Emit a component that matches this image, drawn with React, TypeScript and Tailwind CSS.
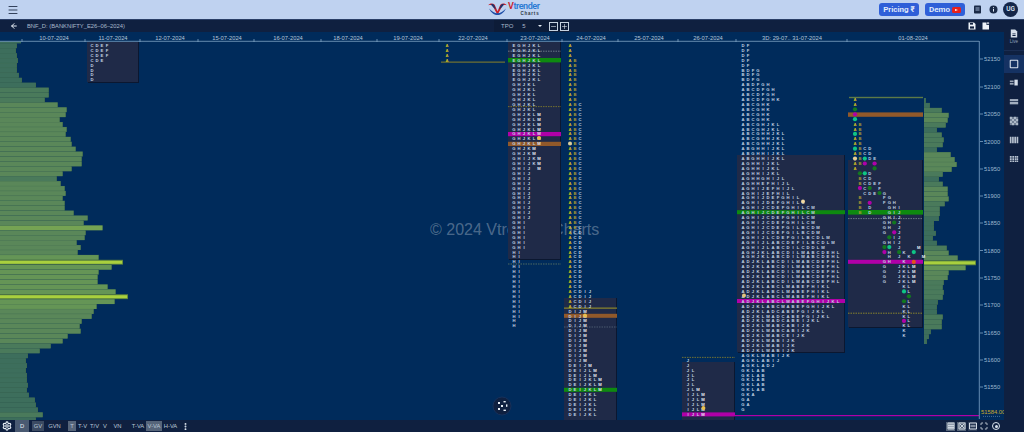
import { ArrowLeft, Maximize, Menu, Minus, Plus, Settings, MoreVertical } from 'lucide-react';

type RowSpec = [number, number, string];

type Session = {
  x: number;
  pitch?: number;
  colors?: Record<string, string>;
  rows: RowSpec[];
};

const LETTER = '#c2d3e3';
const YELLOW = '#d2bf22';
const OLIVE = '#a89a34';
const WHITE = '#eaf1f7';

const rowY = (i: number) => 45.4 + 4.92 * i;

const leftBars = [
  17, 16, 17, 18, 17, 17, 19, 22, 36, 49, 49, 45, 58, 67, 66, 60, 63, 67, 66, 71, 72, 76, 83, 82, 82, 72, 63, 57, 61, 65,
  66, 63, 65, 65, 74, 88, 84, 103, 86, 85, 77, 81, 78, 99, 123, 112, 99, 98, 98, 108, 116, 128, 115, 97, 94, 92, 82, 80,
  81, 68, 63, 51, 40, 28, 26, 27, 26, 27, 27, 28, 27, 29, 35, 36, 38, 43, 36,
];

const rightBars = [
  2, 6, 18, 25, 24, 22, 13, 18, 20, 19, 13, 27, 31, 33, 28, 19, 15, 19, 24, 24, 25, 21, 16, 16, 15, 10, 10, 12, 9, 13, 23,
  25, 34, 52, 42, 25, 24, 20, 19, 20, 19, 14, 13, 13, 19, 18, 18, 7, 5, 3,
];

const dates: [number, string][] = [
  [54, '10-07-2024'],
  [113, '11-07-2024'],
  [170, '12-07-2024'],
  [227, '15-07-2024'],
  [288, '16-07-2024'],
  [348, '18-07-2024'],
  [408, '19-07-2024'],
  [473, '22-07-2024'],
  [535, '23-07-2024'],
  [591, '24-07-2024'],
  [649, '25-07-2024'],
  [708, '26-07-2024'],
  [792, '3D: 29-07.. 31-07-2024'],
  [913, '01-08-2024'],
];

const ticks = [22, 85, 140, 198, 254, 321, 377, 439, 507, 562, 618, 678, 736, 847];

const prices: [number, string][] = [
  [59, '52150'],
  [87, '52100'],
  [114, '52050'],
  [141.5, '52000'],
  [169, '51950'],
  [196, '51900'],
  [223, '51850'],
  [250.5, '51800'],
  [278, '51750'],
  [305, '51700'],
  [333, '51650'],
  [360, '51600'],
  [387, '51550'],
];

// market profile letters, one block per session
const sessions: Session[] = [
  { x: 92, rows: [[0, 2, 'CDEF'], [3, 3, 'CDE'], [4, 7, 'D']] },
  { x: 447, colors: { A: YELLOW }, rows: [[0, 3, 'A']] },
  {
    x: 514,
    colors: { M: WHITE },
    rows: [
      [0, 7, 'EGHJKL'],
      [8, 13, 'GHJKL'],
      [14, 20, 'GHJKLM'],
      [21, 22, 'GHJKM'],
      [23, 24, 'GHIJKM'],
      [25, 25, 'GHIJ M'],
      [26, 35, 'GHIJ'],
      [36, 41, 'GHI'],
      [42, 55, 'HI'],
      [56, 57, 'H'],
    ],
  },
  {
    x: 570,
    colors: { A: YELLOW, B: OLIVE, M: WHITE },
    rows: [
      [0, 2, 'A'],
      [3, 11, 'AB'],
      [12, 37, 'ABC'],
      [38, 49, 'ACD'],
      [50, 53, 'ACDIJ'],
      [54, 64, 'DIJM'],
      [65, 65, 'DEIJM'],
      [66, 67, 'DEIJLM'],
      [68, 70, 'DEIJKLM'],
      [71, 75, 'DEIJKL'],
    ],
  },
  {
    x: 688,
    colors: { M: WHITE },
    rows: [
      [64, 65, 'J'],
      [66, 69, 'JL'],
      [70, 70, 'JLM'],
      [71, 75, 'IJLM'],
    ],
  },
  {
    x: 743,
    rows: [
      [0, 4, 'DF'],
      [5, 7, 'BDFG'],
      [8, 8, 'ABDFGH'],
      [9, 10, 'ABCDFGH'],
      [11, 11, 'ABCDFGHK'],
      [12, 15, 'ABCGHK'],
      [16, 17, 'ABCGHJKL'],
      [18, 20, 'ABCGHHJKL'],
      [21, 23, 'ABGHHIJKL'],
      [24, 26, 'AGHHIJKL'],
      [27, 27, 'AGHHGHIJL'],
      [28, 28, 'AGHHEFHIJL'],
      [29, 29, 'AGHIJEFHIJL'],
      [30, 30, 'AGHIJEFHIL'],
      [31, 31, 'AGHIJDEFGHIL'],
      [32, 32, 'AGHIJDEFGHILC'],
      [33, 36, 'AGHIJCDEFGHILCM'],
      [37, 38, 'AGHIJCDEFGILBCDM'],
      [39, 39, 'AGHIJLCDEFGILBCDLM'],
      [40, 40, 'AGHIJLABCDEFILBCDLM'],
      [41, 41, 'AGHIJLABCDILCDDLM'],
      [42, 43, 'AGHJKLABCDILMABCDEHL'],
      [44, 48, 'ADJKLABCDILMABCDEFHL'],
      [49, 51, 'ADJKLABCLMABEFHIKL'],
      [52, 52, 'ADJKLABCLMABEFGHIJKL'],
      [53, 53, 'ADJKLABCMABEFGHIJKL'],
      [54, 54, 'ADJKLADCABEFGIJKL'],
      [55, 55, 'ADJKLMADCABEFGIJKL'],
      [56, 56, 'ADJKLMADCABEIJKL'],
      [57, 58, 'ADJKLMABCABIJK'],
      [59, 59, 'ADJKLMABCEIJK'],
      [60, 62, 'ADJKLMABIJK'],
      [63, 63, 'AGKLMABIJK'],
      [64, 64, 'AGKLABIJ'],
      [65, 65, 'AGKLADJ'],
      [66, 70, 'GKLAB'],
      [71, 71, 'GKA'],
      [72, 73, 'GA'],
      [74, 74, 'G'],
    ],
  },
  {
    x: 855,
    pitch: 4.9,
    colors: { A: YELLOW, B: OLIVE, M: WHITE },
    rows: [
      [11, 12, 'A'],
      [16, 17, 'AB'],
      [18, 18, ' B'],
      [19, 19, 'AB'],
      [20, 20, 'AB'],
      [21, 21, ' BCD'],
      [22, 22, 'ABCD'],
      [23, 23, ' B DE'],
      [24, 24, 'AB  D'],
      [25, 25, 'A'],
      [26, 26, '   D'],
      [27, 27, ' BCD'],
      [28, 28, ' BCDEF'],
      [29, 29, '  C  F'],
      [30, 30, '  CDE G'],
      [31, 31, ' B    FG'],
      [32, 32, ' B    FGH'],
      [33, 33, ' B D   GHI'],
      [34, 34, ' B D   GIJ'],
      [35, 35, '      GHIJ'],
      [36, 37, '      GH J'],
      [38, 38, '      G  J'],
      [39, 39, '        IJ'],
      [40, 40, '      GHIJ'],
      [41, 41, '         J   M'],
      [42, 42, '       H  K'],
      [43, 43, '       H J K  M'],
      [44, 44, '      GH  K'],
      [45, 48, '      G  JKLM'],
      [49, 49, '          KL'],
      [50, 50, '           L'],
      [52, 52, '           L'],
      [53, 55, '          KL'],
      [56, 56, '           L'],
      [57, 57, '          KL'],
      [58, 59, '          K'],
    ],
  },
];

const GREEN = '#12791f';
const TEAL = '#0fc585';
const PINK = '#b000a8';

// [slot, row, colour] opportunity markers on the last session
const dots: [number, number, string][] = [
  [0, 13, GREEN],
  [0, 14, PINK],
  [0, 15, TEAL],
  [0, 18, TEAL],
  [0, 21, TEAL],
  [0, 23, '#e6cf94'],
  [2, 23, TEAL],
  [2, 24, PINK],
  [4, 24, PINK],
  [4, 25, GREEN],
  [1, 26, GREEN],
  [2, 26, TEAL],
  [1, 29, PINK],
  [3, 29, GREEN],
  [5, 30, GREEN],
  [3, 32, PINK],
  [8, 36, GREEN],
  [8, 38, PINK],
  [7, 39, GREEN],
  [6, 41, GREEN],
  [7, 41, TEAL],
  [6, 42, PINK],
  [9, 42, GREEN],
  [12, 42, TEAL],
  [12, 44, '#e2531a'],
  [10, 50, TEAL],
  [11, 51, GREEN],
  [10, 52, GREEN],
  [10, 56, PINK],
];

function barColor(width: number, max: number) {
  const r = width / max;
  if (r < 0.3) return '#3d6e5c';
  if (r < 0.45) return '#4a7a5b';
  if (r < 0.75) return '#5a8759';
  return '#659556';
}

function Profile({
  x,
  top,
  bars,
  peaks,
  max,
  mid = [],
}: {
  x: number;
  top: number;
  bars: number[];
  peaks: number[];
  max: number;
  mid?: number[];
}) {
  return (
    <g>
      {bars.map((w, i) => {
        const peak = peaks.includes(i);
        const fill = peak ? '#a9d03e' : mid.includes(i) ? '#75a353' : barColor(w, max);
        return (
          <g key={i}>
            <rect x={x} y={top + i * 4.92} width={w} height={4.92} fill={peak ? '#587f3e' : '#3f6a50'} />
            <rect
              x={x}
              y={top + i * 4.92 + (peak ? 1 : 0.2)}
              width={Math.max(w - 0.8, 0.5)}
              height={peak ? 3 : 4.7}
              fill={fill}
            />
          </g>
        );
      })}
    </g>
  );
}

function Block({ x, y, w, h }: { x: number; y: number; w: number; h: number }) {
  return (
    <g>
      <rect x={x + 1} y={y} width={w} height={h + 1} fill="#0b1730" />
      <rect x={x} y={y} width={w} height={h} fill="#1f2a48" />
    </g>
  );
}

function Letters({ session }: { session: Session }) {
  const pitch = session.pitch ?? 5;
  const out: React.ReactNode[] = [];
  session.rows.forEach(([from, to, text]) => {
    for (let i = from; i <= to; i++) {
      out.push(
        <text key={`${from}-${i}`} y={rowY(i) + 1.5} fontSize={4.2} fontWeight={700} textAnchor="middle">
          {text.split('').map((ch, c) =>
            ch === ' ' ? null : (
              <tspan key={c} x={session.x + c * pitch} fill={session.colors?.[ch] ?? LETTER}>
                {ch}
              </tspan>
            ),
          )}
        </text>,
      );
    }
  });
  return <g>{out}</g>;
}

function Chart() {
  return (
    <svg viewBox="0 32 1004 388" width={1004} height={388} className="block shrink-0 font-['Liberation_Sans',sans-serif]">
      <rect x={0} y={32} width={1004} height={388} fill="#002b5b" />

      <rect x={0} y={41.4} width={21} height={2} fill="#3d6e5c" />
      <Profile x={0} top={43.3} bars={leftBars} peaks={[44, 51]} mid={[37]} max={128} />
      <Profile x={924} top={98} bars={rightBars} peaks={[33]} max={52} />

      <text x={430} y={235} fontSize={16} fill="#ffffff" fillOpacity={0.3}>
        © 2024 Vtrender Charts
      </text>

      <Block x={87} y={42} w={51} h={40} />
      <Block x={508} y={42} w={52} h={217} />
      <Block x={564} y={298} w={52} h={122} />
      <Block x={682} y={362} w={52} h={58} />
      <Block x={737} y={155} w={107} h={197} />
      <Block x={848} y={160} w={74} h={167} />

      {/* value area and poc bands */}
      <rect x={441} y={61.6} width={64} height={1} fill="#8a8229" />
      <rect x={508} y={58} width={53} height={4.4} fill="#0e8a10" />
      <rect x={508} y={132} width={53} height={4.2} fill="#b000a8" />
      <rect x={508} y={141.8} width={53} height={4.2} fill="#91592a" />
      <rect x={564} y={307.6} width={53} height={1} fill="#a39a26" />
      <rect x={564} y={313.8} width={53} height={4} fill="#91592a" />
      <rect x={564} y={387.8} width={53} height={4} fill="#0e8a10" />
      <rect x={682} y={412.4} width={53} height={4} fill="#b000a8" />
      <rect x={737} y={210.2} width={108} height={4} fill="#0e8a10" />
      <rect x={737} y={299} width={108} height={4} fill="#b000a8" />
      <rect x={849} y={96.8} width={74} height={1.4} fill="#5d7a47" />
      <rect x={848} y={112.4} width={75} height={4.4} fill="#91592a" />
      <rect x={848} y={210} width={75} height={4.6} fill="#0e8a10" />
      <rect x={848} y={259.8} width={75} height={4} fill="#b000a8" />
      <rect x={735} y={415} width={244} height={1.2} fill="#b000a8" />

      <g strokeWidth={0.8} strokeDasharray="1.5 1">
        <line x1={508} x2={561} y1={51.2} y2={51.2} stroke="#7d8a96" />
        <line x1={508} x2={561} y1={106.6} y2={106.6} stroke="#8a8229" />
        <line x1={508} x2={561} y1={264} y2={264} stroke="#5f7a62" />
        <line x1={564} x2={617} y1={327} y2={327} stroke="#55657a" />
        <line x1={682} x2={735} y1={357.4} y2={357.4} stroke="#8a8229" />
        <line x1={848} x2={923} y1={218.6} y2={218.6} stroke="#7d8a96" />
        <line x1={848} x2={923} y1={313.2} y2={313.2} stroke="#a39a26" />
      </g>

      {sessions.map((s) => (
        <Letters key={s.x} session={s} />
      ))}

      {dots.map(([slot, row, color], i) => (
        <circle key={i} cx={855 + slot * 4.9} cy={rowY(row)} r={2.1} fill={color} />
      ))}
      <circle cx={539} cy={138} r={2} fill="#e9c04e" />
      <circle cx={570} cy={143.5} r={2} fill="#d9cfa0" />
      <circle cx={585} cy={315.6} r={2} fill="#e9c04e" />
      <circle cx={703.4} cy={408} r={2} fill="#e9c04e" />
      <circle cx={803} cy={201.6} r={2} fill="#f1d9a0" />
      <circle cx={744} cy={295.6} r={2} fill="#e2c27a" />

      {/* date axis */}
      <line x1={0} x2={979} y1={41.3} y2={41.3} stroke="#7fa3c4" strokeWidth={0.8} />
      {ticks.map((t) => (
        <line key={t} x1={t} x2={t} y1={39} y2={42} stroke="#7fa3c4" strokeWidth={0.8} />
      ))}
      {dates.map(([x, label]) => (
        <text key={label} x={x} y={40} fontSize={5.8} textAnchor="middle" fill="#b4c6d8">
          {label}
        </text>
      ))}

      {/* price axis */}
      <line x1={979.3} x2={979.3} y1={41} y2={419} stroke="#6f97bd" strokeWidth={0.9} />
      {prices.map(([y, label]) => (
        <g key={label}>
          <line x1={980} x2={983} y1={y} y2={y} stroke="#7fa3c4" strokeWidth={0.8} />
          <text x={984} y={y + 2} fontSize={5.8} fill="#9db8d0">
            {label}
          </text>
        </g>
      ))}
      <text x={981} y={414} fontSize={5.8} fill="#c9a92c">
        51584.00
      </text>
      <line x1={983} x2={1000} y1={416.4} y2={416.4} stroke="#6f97bd" strokeWidth={0.6} strokeDasharray="1 1" />

      <circle cx={502} cy={406} r={9} fill="#0f2040" stroke="#17305a" strokeWidth={1} />
      <g fill="#e6edf5">
        <rect x={498} y={402} width={2} height={2} />
        <rect x={503.5} y={401} width={2.2} height={1.4} />
        <rect x={506} y={404.4} width={1.4} height={2.4} />
        <rect x={498} y={408} width={2} height={2} />
        <rect x={503.5} y={409.6} width={2.4} height={1.4} />
        <rect x={501} y={405} width={2} height={2} />
      </g>
    </svg>
  );
}

function Logo() {
  return (
    <div className="flex items-center gap-[1px]">
      <svg width={19} height={14} viewBox="0 0 20 15">
        <path d="M0 3.5C2 1 5 1 7 3L10 10L13 3C15 1 18 1 20 3.5C17 3 15.6 3.4 14.4 5.5L10.4 13H9.6L5.6 5.5C4.4 3.4 3 3 0 3.5Z" fill="#c8202c" />
        <path d="M1 7C3 12 7 14 10 14C13 14 17 12 19 7C16 10.5 13 12 10 12C7 12 4 10.5 1 7Z" fill="#1f4fa8" />
        <path d="M3 2.4C4.6 2 6 2.4 6.8 4L8.4 8C6.6 7 4.6 5 3 2.4Z" fill="#1c3570" />
        <path d="M17 2.4C15.4 2 14 2.4 13.2 4L11.6 8C13.4 7 15.4 5 17 2.4Z" fill="#1c3570" />
      </svg>
      <div className="flex flex-col items-end leading-none">
        <span className="text-[9px] leading-[9px] font-semibold text-[#2a7ad4] font-['Roboto',sans-serif] tracking-[-0.45px]">
          <span className="text-[#c8202c]">V</span>trender
        </span>
        <span className="text-[4.5px] leading-[5px] font-bold tracking-[0.8px] text-[#2b3440] font-['Liberation_Sans',sans-serif]">Charts</span>
      </div>
    </div>
  );
}

function Header() {
  return (
    <header className="relative flex h-[20px] items-center justify-between border-b border-[#2a3f68] bg-[#bfd2f0] pl-[7px] pr-[6px]">
      <Menu size={12} strokeWidth={2} className="text-[#33425c]" />
      <div className="absolute left-[488px] top-[2px]">
        <Logo />
      </div>
      <div className="flex items-center">
        <button className="mr-[6px] flex h-[13px] w-[40px] items-center justify-center rounded-[3px] bg-[#2f5fd8] text-[8px] font-semibold text-[#e6eefb] font-['Roboto',sans-serif]">
          Pricing ₹
        </button>
        <button className="mr-[8px] flex h-[13px] w-[40px] items-center justify-center gap-[2px] rounded-[3px] bg-[#2f5fd8] text-[8px] font-semibold text-[#e6eefb] font-['Roboto',sans-serif]">
          Demo
          <span className="flex h-[6px] w-[9px] items-center justify-center rounded-[1.5px] bg-[#e8201c]">
            <span className="h-0 w-0 border-y-[1.5px] border-l-[3px] border-y-transparent border-l-white" />
          </span>
        </button>
        <svg width={9} height={9} viewBox="0 0 9 9" className="mr-[7px]">
          <rect x={1} y={0.5} width={7} height={8} rx={0.8} fill="#1a2a48" />
          <path d="M2.5 3h4M2.5 5h4" stroke="#bfd2f0" strokeWidth={0.8} />
        </svg>
        <svg width={9} height={9} viewBox="0 0 9 9" className="mr-[5px]">
          <circle cx={4.5} cy={4.5} r={4} fill="#1a2a48" />
          <path d="M4.5 4v2.6M4.5 2.2v1" stroke="#e6eefb" strokeWidth={1} />
        </svg>
        <div className="flex h-[15px] w-[15px] items-center justify-center rounded-full bg-[#14264a] text-[6.5px] font-semibold text-[#d8e2f0] font-['Roboto',sans-serif]">
          UG
        </div>
      </div>
    </header>
  );
}

function Toolbar() {
  return (
    <div className="relative flex h-[12px] shrink-0 items-center bg-[#0f2040] pl-[10px] pr-[14px] text-[#a9b9cc] font-['Liberation_Sans',sans-serif]">
      <ArrowLeft size={8} strokeWidth={3} className="text-[#e6edf5]" />
      <span className="ml-[9px] text-[5.8px]">BNF_D: (BANKNIFTY_E26–06–2024)</span>
      <div className="absolute left-[494px] top-0 flex h-[12px] items-center bg-[#0d1c38] pl-[7px]">
        <span className="text-[6px]">TPO</span>
        <span className="ml-[9px] text-[6px]">5</span>
        <span className="ml-[12px] h-0 w-0 border-x-[2px] border-t-[2px] border-x-transparent border-t-[#e6edf5]" />
        <span className="ml-[7px] flex h-[9px] w-[9px] items-center justify-center border border-[#c5d2e0] text-[#e6edf5]">
          <Minus size={7} strokeWidth={2} />
        </span>
        <span className="ml-[2px] flex h-[9px] w-[9px] items-center justify-center border border-[#c5d2e0] text-[#e6edf5]">
          <Plus size={7} strokeWidth={2} />
        </span>
      </div>
      <div className="ml-auto flex items-center gap-[6px]">
        <svg width={8} height={8} viewBox="0 0 8 8">
          <path d="M0.5 0.5H6L7.5 2V7.5H0.5Z" fill="#eef3f8" />
          <rect x={2} y={1} width={3} height={1.6} fill="#0f2040" />
          <rect x={2} y={4.4} width={4} height={2.2} fill="#0f2040" />
        </svg>
        <svg width={8} height={8} viewBox="0 0 8 8">
          <path d="M0.5 0.5H4.5V3H7V7.5H0.5Z" fill="#eef3f8" />
          <path d="M6 0V2.4M4.9 1.2H7.2" stroke="#eef3f8" strokeWidth={0.8} />
        </svg>
      </div>
    </div>
  );
}

function FootBtn({ label, active, w }: { label: string; active?: boolean; w: string }) {
  return (
    <span className={`flex h-[10px] items-center justify-center text-[5.8px] text-[#b9c6d6] ${w} ${active ? 'bg-[#56657a]' : ''}`}>
      {label}
    </span>
  );
}

function FootIcon({ active, children }: { active?: boolean; children: React.ReactNode }) {
  return (
    <span className={`flex h-[9px] w-[9px] items-center justify-center ${active ? 'bg-[#56657a]' : 'bg-[#2a3a56]'}`}>
      <svg width={8} height={8} viewBox="0 0 8 8">
        {children}
      </svg>
    </span>
  );
}

function Footer() {
  return (
    <div className="flex h-[12px] items-center bg-[#0f2040] pl-[2px] pr-[3px] font-['Liberation_Sans',sans-serif]">
      <Settings size={10} strokeWidth={2.8} className="text-[#e6edf5]" />
      <span className="ml-[3px] flex h-[12px] w-[14px] items-center justify-center bg-[#4a5a72] text-[5.8px] text-[#e6edf5]">D</span>
      <span className="ml-[3px] flex h-[10px] w-[12px] items-center justify-center bg-[#3b4a62] text-[5.8px] text-[#b9c6d6]">GV</span>
      <FootBtn label="GVN" w="ml-[3px] w-[15px]" />
      <FootBtn label="T" active w="ml-[6px] w-[8px]" />
      <FootBtn label="T-V" w="ml-[1px] w-[11px]" />
      <FootBtn label="T/V" w="ml-[1px] w-[11px]" />
      <FootBtn label="V" w="ml-[1px] w-[8px]" />
      <FootBtn label="VN" w="ml-[3px] w-[11px]" />
      <FootBtn label="T-VA" w="ml-[7px] w-[16px]" />
      <FootBtn label="V-VA" active w="w-[16px]" />
      <FootBtn label="H-VA" w="ml-[1px] w-[15px]" />
      <MoreVertical size={9} strokeWidth={3} className="ml-[3px] text-[#e6edf5]" />
      <div className="ml-auto mr-[21px] flex items-center gap-[2px]">
        <FootIcon active>
          <path d="M1 1h6v6H1zM1 3.6h6M1 5.4h6M3 1v6M5 1v6" fill="none" stroke="#e6edf5" strokeWidth={0.8} />
        </FootIcon>
        <FootIcon active>
          <path d="M1 1h6v6H1zM2 2l4 4M6 2l-4 4" fill="none" stroke="#e6edf5" strokeWidth={0.8} />
        </FootIcon>
        <FootIcon>
          <path d="M0.5 1h7v6h-7zM1.5 4h5" fill="none" stroke="#e6edf5" strokeWidth={0.9} />
        </FootIcon>
        <Maximize size={8} strokeWidth={2.4} className="mx-[1px] text-[#e6edf5]" />
        <span className="ml-[1px] flex h-[8px] w-[8px] items-center justify-center rounded-full border border-[#d9e2ec]">
          <span className="h-[3px] w-[3px] rounded-full bg-[#d9e2ec]" />
        </span>
      </div>
    </div>
  );
}

function SideIcon({ children, active }: { children: React.ReactNode; active?: boolean }) {
  return (
    <div className={`flex items-center justify-center ${active ? 'h-[18px] bg-[#153263]' : 'h-[19.2px]'}`}>
      <svg width={10} height={10} viewBox="0 0 12 12">
        {children}
      </svg>
    </div>
  );
}

function Sidebar() {
  const ink = '#d6dfea';
  return (
    <aside className="flex w-[20px] flex-col bg-[#0f2040]">
      <div className="flex h-[31px] flex-col items-center justify-center border-b border-[#1a2d52] pt-[2px]">
        <svg width={8} height={9} viewBox="0 0 10 11">
          <path d="M1 .5h5.5L9 3v7.5H1z" fill={ink} />
          <path d="M3 5.5h4v1H3zM3 7.5h4v1H3z" fill="#0f2040" />
        </svg>
        <span className="mt-[1px] text-[4.5px] leading-[5px] text-[#8fa3bb] font-['Liberation_Sans',sans-serif]">Live</span>
      </div>
      <div className="mt-[4px]" />
      <SideIcon active>
        <rect x={1.5} y={1.5} width={9} height={9} rx={0.5} fill="none" stroke={ink} strokeWidth={1.3} />
      </SideIcon>
      <SideIcon>
        <rect x={1} y={3} width={4.5} height={2} fill={ink} opacity={0.7} />
        <rect x={1} y={6} width={4.5} height={2} fill={ink} opacity={0.7} />
        <rect x={6.5} y={2} width={4} height={7} fill={ink} />
      </SideIcon>
      <SideIcon>
        <rect x={1} y={2.5} width={10} height={2.6} fill={ink} opacity={0.75} />
        <rect x={1} y={6} width={10} height={2.8} fill={ink} opacity={0.75} />
      </SideIcon>
      <SideIcon>
        <rect x={1} y={1} width={10} height={10} fill={ink} opacity={0.5} />
        <path d="M1 1h2.5v2.5H1zM6 1h2.5v2.5H6zM3.5 3.5H6V6H3.5zM8.5 3.5H11V6H8.5zM1 6h2.5v2.5H1zM6 6h2.5v2.5H6zM3.5 8.5H6V11H3.5zM8.5 8.5H11V11H8.5z" fill={ink} opacity={0.6} />
      </SideIcon>
      <SideIcon>
        <path d="M1 2h2v8H1zM3.7 2h2v8h-2zM6.4 2h2v8h-2zM9.1 2h2v8h-2z" fill={ink} opacity={0.85} />
      </SideIcon>
      <SideIcon>
        <path d="M1 2.5h2.2v2H1zM4 2.5h2.2v2H4zM7 2.5h2.2v2H7zM1 5.2h2.2v2H1zM4 5.2h2.2v2H4zM7 5.2h2.2v2H7zM1 7.9h2.2v1.6H1zM4 7.9h2.2v1.6H4zM7 7.9h2.2v1.6H7z" fill={ink} opacity={0.85} />
        <path d="M9.6 2.5H11v2H9.6zM9.6 5.2H11v2H9.6zM9.6 7.9H11v1.6H9.6z" fill={ink} opacity={0.85} />
      </SideIcon>
    </aside>
  );
}

export default function App() {
  return (
    <div className="flex h-[432px] w-[1024px] flex-col overflow-hidden bg-[#002b5b]">
      <Header />
      <div className="flex h-[400px] min-h-0">
        <div className="flex w-[1004px] flex-col">
          <Toolbar />
          <Chart />
        </div>
        <Sidebar />
      </div>
      <Footer />
    </div>
  );
}
